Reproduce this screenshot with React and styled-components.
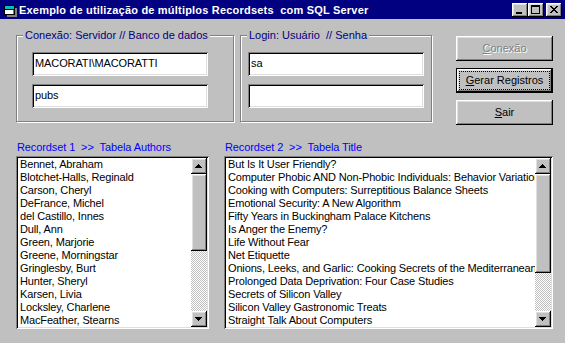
import React from 'react';
import styled, { createGlobalStyle } from 'styled-components';

const GlobalStyle = createGlobalStyle`
  html, body { margin: 0; padding: 0; background: #c0c0c0; }
  body { font-family: "Liberation Sans", Arial, sans-serif; font-size: 11px; }
  * { box-sizing: border-box; }
`;

const raised = `box-shadow: inset -1px -1px #000, inset 1px 1px #fff, inset -2px -2px #808080, inset 2px 2px #dfdfdf;`;
const sunken = `box-shadow: inset 1px 1px #808080, inset -1px -1px #fff, inset 2px 2px #000, inset -2px -2px #dfdfdf;`;

const Window = styled.div`
  width: 565px;
  height: 343px;
  background: #c0c0c0;
  display: flex;
  flex-direction: column;
  overflow: hidden;
`;

const TitleBar = styled.div`
  height: 19px;
  flex-shrink: 0;
  background: #000080;
  display: flex;
  align-items: center;
  padding: 0 3px 0 2px;
`;

const TitleText = styled.span`
  flex: 1;
  color: #fff;
  font-weight: bold;
  font-size: 11px;
  letter-spacing: 0.2px;
  line-height: 13px;
  padding-top: 1px;
  margin-left: 1px;
  white-space: pre;
`;

const CaptionButtons = styled.div`
  display: flex;
  align-items: center;
`;

const CaptionButton = styled.div`
  width: 16px;
  height: 14px;
  background: #c0c0c0;
  ${raised}
  margin-left: ${(p) => (p.$gap ? 2 : 0)}px;
  display: flex;
`;

const Body = styled.div`
  flex: 1;
  display: flex;
  flex-direction: column;
`;

const TopRow = styled.div`
  display: flex;
  align-items: flex-start;
  height: 106px;
  padding-left: 16px;
`;

const Group = styled.div`
  position: relative;
  width: ${(p) => p.$w}px;
  height: 87px;
  margin-top: 16px;
  margin-right: ${(p) => p.$mr}px;
  border: 1px solid #808080;
  box-shadow: inset 1px 1px #fff, 1px 1px #fff;
  padding: 16px 0 0 ${(p) => p.$pl}px;
  display: flex;
  flex-direction: column;
  gap: 8px;
`;

const GroupCaption = styled.span`
  position: absolute;
  top: -7px;
  left: 6px;
  padding: 0 2px;
  background: #c0c0c0;
  color: #000080;
  line-height: 13px;
  white-space: pre;
`;

const Field = styled.input`
  width: 176px;
  height: 24px;
  border: none;
  outline: none;
  background: #fff;
  ${sunken}
  padding: 4px 3px 7px 3px;
  font-family: inherit;
  font-size: 11px;
  letter-spacing: -0.1px;
  line-height: 13px;
  color: #000;
  margin: 0;
`;

const ButtonColumn = styled.div`
  display: flex;
  flex-direction: column;
  gap: 7px;
  margin-top: 17px;
  margin-left: 24px;
`;

const Button = styled.div`
  width: 97px;
  height: 25px;
  background: #c0c0c0;
  ${raised}
  border: ${(p) => (p.$default ? '1px solid #000' : 'none')};
  padding: ${(p) => (p.$default ? '2px' : '0')};
  display: flex;
  align-items: center;
  justify-content: center;
  line-height: 13px;
  color: ${(p) => (p.$disabled ? '#808080' : '#000')};
  text-shadow: ${(p) => (p.$disabled ? '1px 1px #fff' : 'none')};
  white-space: nowrap;
`;

const FocusRing = styled.span`
  flex: 1;
  align-self: stretch;
  border: 1px dotted #000;
  display: flex;
  align-items: center;
  justify-content: center;
`;

const BottomRow = styled.div`
  display: flex;
  gap: 15px;
  padding-left: 16px;
  margin-top: 16px;
`;

const Column = styled.div`
  display: flex;
  flex-direction: column;
  width: ${(p) => p.$w}px;
`;

const ListLabel = styled.div`
  color: #0000ff;
  line-height: 13px;
  height: 13px;
  padding-left: 1px;
  margin-bottom: 2px;
  letter-spacing: -0.1px;
  white-space: pre;
`;

const ListBox = styled.div`
  height: 173px;
  background: #fff;
  ${sunken}
  padding: 2px;
  display: flex;
`;

const Items = styled.div`
  flex: 1;
  min-width: 0;
  overflow: hidden;
`;

const Item = styled.div`
  line-height: 13px;
  height: 13px;
  padding-left: 2px;
  letter-spacing: -0.15px;
  white-space: nowrap;
  color: #000;
`;

const ScrollBar = styled.div`
  width: 16px;
  flex-shrink: 0;
  display: flex;
  flex-direction: column;
`;

const ScrollButton = styled.div`
  height: 16px;
  flex-shrink: 0;
  background: #c0c0c0;
  ${raised}
  display: flex;
`;

const Thumb = styled.div`
  height: ${(p) => p.$h}px;
  flex-shrink: 0;
  background: #c0c0c0;
  ${raised}
`;

const Track = styled.div`
  flex: 1;
  background-color: #c0c0c0;
  background-image: conic-gradient(#fff 25%, #c0c0c0 0 50%, #fff 0 75%, #c0c0c0 0);
  background-size: 2px 2px;
`;

const Glyph = ({ children, w = 16, h = 14 }) => (
  <svg width={w} height={h} viewBox={`0 0 ${w} ${h}`} shapeRendering="crispEdges" style={{ display: 'block' }}>
    <g fill="#000">{children}</g>
  </svg>
);

const MinGlyph = () => (
  <Glyph>
    <rect x="4" y="9" width="6" height="2" />
  </Glyph>
);

const MaxGlyph = () => (
  <Glyph>
    <rect x="3" y="2" width="9" height="2" />
    <rect x="3" y="2" width="1" height="9" />
    <rect x="11" y="2" width="1" height="9" />
    <rect x="3" y="10" width="9" height="1" />
  </Glyph>
);

const CloseGlyph = () => (
  <Glyph>
    {[0, 1, 2, 3, 4, 5, 6].map((i) => (
      <React.Fragment key={i}>
        <rect x={4 + i} y={3 + i} width="2" height="1" />
        <rect x={10 - i} y={3 + i} width="2" height="1" />
      </React.Fragment>
    ))}
  </Glyph>
);

const UpArrow = () => (
  <Glyph w={16} h={16}>
    {[0, 1, 2, 3].map((i) => (
      <rect key={i} x={7 - i} y={6 + i} width={1 + 2 * i} height="1" />
    ))}
  </Glyph>
);

const DownArrow = () => (
  <Glyph w={16} h={16}>
    {[0, 1, 2, 3].map((i) => (
      <rect key={i} x={4 + i} y={6 + i} width={7 - 2 * i} height="1" />
    ))}
  </Glyph>
);

const AppIcon = () => (
  <svg width="16" height="16" viewBox="0 0 16 16" shapeRendering="crispEdges" style={{ display: 'block' }}>
    <rect x="5" y="6" width="10" height="9" fill="#808080" />
    <rect x="2.5" y="3.5" width="10" height="9" fill="#fff" stroke="#000" />
    <rect x="3" y="4" width="9" height="3" fill="#00c0c0" />
    <rect x="3" y="7" width="9" height="1" fill="#000" />
    <rect x="11" y="8" width="1" height="4" fill="#808080" />
  </svg>
);

const Key = styled.span`
  text-decoration: underline;
`;

const authors = [
  'Bennet, Abraham',
  'Blotchet-Halls, Reginald',
  'Carson, Cheryl',
  'DeFrance, Michel',
  'del Castillo, Innes',
  'Dull, Ann',
  'Green, Marjorie',
  'Greene, Morningstar',
  'Gringlesby, Burt',
  'Hunter, Sheryl',
  'Karsen, Livia',
  'Locksley, Charlene',
  'MacFeather, Stearns',
];

const titles = [
  'But Is It User Friendly?',
  'Computer Phobic AND Non-Phobic Individuals: Behavior Variations',
  'Cooking with Computers: Surreptitious Balance Sheets',
  'Emotional Security: A New Algorithm',
  'Fifty Years in Buckingham Palace Kitchens',
  'Is Anger the Enemy?',
  'Life Without Fear',
  'Net Etiquette',
  'Onions, Leeks, and Garlic: Cooking Secrets of the Mediterranean',
  'Prolonged Data Deprivation: Four Case Studies',
  'Secrets of Silicon Valley',
  'Silicon Valley Gastronomic Treats',
  'Straight Talk About Computers',
];

const List = ({ items, thumb }) => (
  <ListBox>
    <Items>
      {items.map((t) => (
        <Item key={t}>{t}</Item>
      ))}
    </Items>
    <ScrollBar>
      <ScrollButton>
        <UpArrow />
      </ScrollButton>
      <Thumb $h={thumb} />
      <Track />
      <ScrollButton>
        <DownArrow />
      </ScrollButton>
    </ScrollBar>
  </ListBox>
);

export default function App() {
  return (
    <>
      <GlobalStyle />
      <Window>
        <TitleBar>
          <AppIcon />
          <TitleText>Exemplo de utilização de múltiplos Recordsets  com SQL Server</TitleText>
          <CaptionButtons>
            <CaptionButton>
              <MinGlyph />
            </CaptionButton>
            <CaptionButton>
              <MaxGlyph />
            </CaptionButton>
            <CaptionButton $gap>
              <CloseGlyph />
            </CaptionButton>
          </CaptionButtons>
        </TitleBar>
        <Body>
          <TopRow>
            <Group $w={218} $mr={6} $pl={15}>
              <GroupCaption>Conexão: Servidor // Banco de dados</GroupCaption>
              <Field readOnly defaultValue="MACORATI\MACORATTI" />
              <Field readOnly defaultValue="pubs" />
            </Group>
            <Group $w={192} $mr={0} $pl={7}>
              <GroupCaption>Login: Usuário  // Senha</GroupCaption>
              <Field readOnly defaultValue="sa" />
              <Field readOnly defaultValue="" />
            </Group>
            <ButtonColumn>
              <Button $disabled>
                <span>
                  <Key>C</Key>onexão
                </span>
              </Button>
              <Button $default>
                <FocusRing>
                  <span>
                    <Key>G</Key>erar Registros
                  </span>
                </FocusRing>
              </Button>
              <Button>
                <span>
                  <Key>S</Key>air
                </span>
              </Button>
            </ButtonColumn>
          </TopRow>
          <BottomRow>
            <Column $w={193}>
              <ListLabel>Recordset 1  &gt;&gt;  Tabela Authors</ListLabel>
              <List items={authors} thumb={77} />
            </Column>
            <Column $w={329}>
              <ListLabel>Recordset 2  &gt;&gt;  Tabela Title</ListLabel>
              <List items={titles} thumb={99} />
            </Column>
          </BottomRow>
        </Body>
      </Window>
    </>
  );
}
